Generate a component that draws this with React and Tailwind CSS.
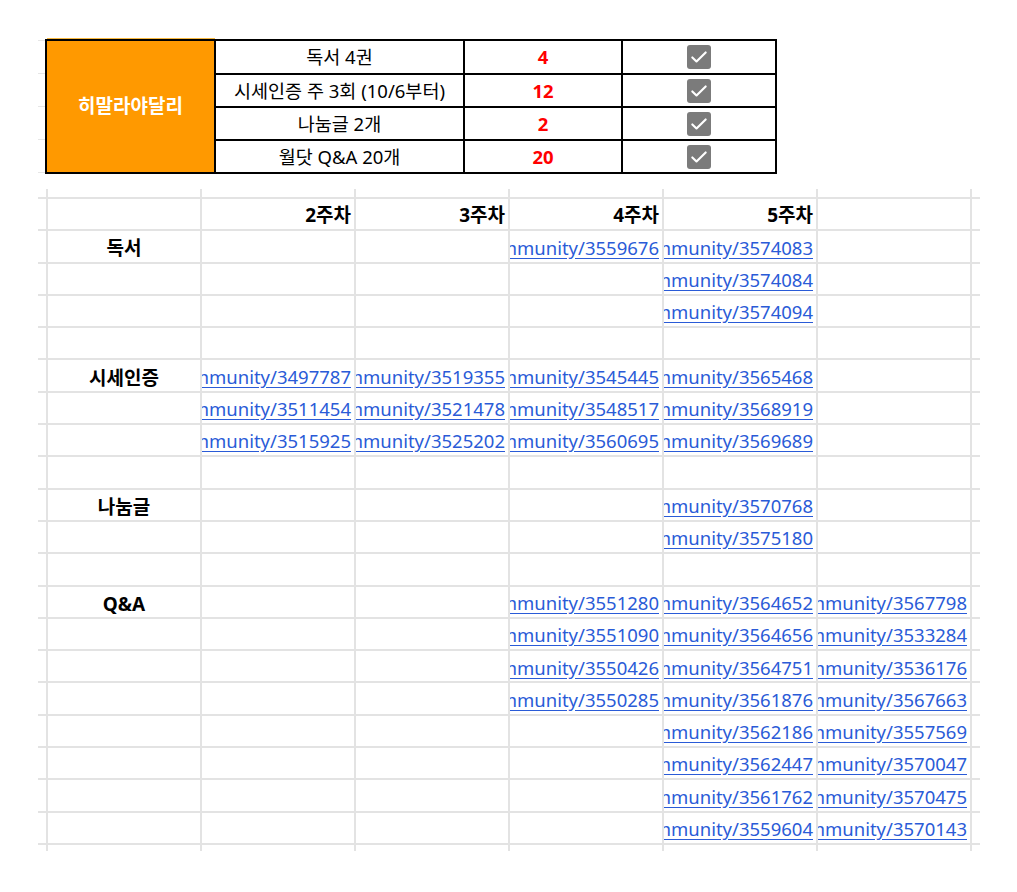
import React from "react";

const FONT = { fontFamily: '"Noto Sans", "Noto Sans CJK KR", sans-serif' };

const topRows = [
  { label: "독서 4권", n: "4" },
  { label: "시세인증 주 3회 (10/6부터)", n: "12" },
  { label: "나눔글 2개", n: "2" },
  { label: "월닷 Q&A 20개", n: "20" },
];

const grid = [
  ["", "2주차", "3주차", "4주차", "5주차", ""],
  ["독서", "", "", "3559676", "3574083", ""],
  ["", "", "", "", "3574084", ""],
  ["", "", "", "", "3574094", ""],
  ["", "", "", "", "", ""],
  ["시세인증", "3497787", "3519355", "3545445", "3565468", ""],
  ["", "3511454", "3521478", "3548517", "3568919", ""],
  ["", "3515925", "3525202", "3560695", "3569689", ""],
  ["", "", "", "", "", ""],
  ["나눔글", "", "", "", "3570768", ""],
  ["", "", "", "", "3575180", ""],
  ["", "", "", "", "", ""],
  ["Q&A", "", "", "3551280", "3564652", "3567798"],
  ["", "", "", "3551090", "3564656", "3533284"],
  ["", "", "", "3550426", "3564751", "3536176"],
  ["", "", "", "3550285", "3561876", "3567663"],
  ["", "", "", "", "3562186", "3557569"],
  ["", "", "", "", "3562447", "3570047"],
  ["", "", "", "", "3561762", "3570475"],
  ["", "", "", "", "3559604", "3570143"],
];

function Check() {
  return (
    <div className="w-[24px] h-[24px] rounded-[3px] bg-[#7b7b7b] flex items-center justify-center">
      <svg width="20" height="20" viewBox="0 0 24 24" fill="none">
        <path d="M4 12.5l5 4.8L20 6.5" stroke="white" strokeWidth="2.6" strokeLinecap="round" strokeLinejoin="round" />
      </svg>
    </div>
  );
}

function Cell({ r, c, v }) {
  if (c === 0) {
    return (
      <div className="bg-white flex items-center justify-center pt-[5px] font-bold text-black text-[19px] leading-none">
        {v}
      </div>
    );
  }
  if (r === 0) {
    return (
      <div className="bg-white flex items-center justify-end pr-[3px] pt-[3px] font-bold text-black text-[19px] leading-none">
        {v}
      </div>
    );
  }
  if (!v) return <div className="bg-white" />;
  return (
    <div className="bg-white flex items-center justify-end overflow-hidden whitespace-nowrap pr-[3px] pt-[3px]">
      <a className="shrink-0 text-[18.5px] leading-none text-[#2a5bd7] underline underline-offset-[3px]">
        {"https://cafe.naver.com/community/" + v}
      </a>
    </div>
  );
}

export default function App() {
  return (
    <div className="w-[1017px] h-[892px] bg-white overflow-hidden" style={FONT}>
      <div className="pt-[38px] flex">
        <div className="w-[45px] pl-[38px] pt-[2px] flex flex-col">
          <div className="h-[1px] bg-[#e6e6e6]" />
          <div className="h-[33px] border-b border-[#e6e6e6]" />
          <div className="h-[33px] border-b border-[#e6e6e6]" />
          <div className="h-[33px] border-b border-[#e6e6e6]" />
          <div className="h-[33px] border-b border-[#e6e6e6]" />
        </div>
        <div className="flex flex-col">
          <div className="ml-[2px] w-[168px] h-[1px] bg-[#f7b840]" />
          <div className="grid grid-cols-[167px_247px_156px_152px] grid-rows-[32px_31px_31px_31px] gap-[2px] p-[2px] bg-black w-[732px]">
            <div className="row-span-4 bg-[#ff9900] flex items-center justify-center text-white font-bold text-[19px]">
              히말라야달리
            </div>
            {topRows.map((t, i) => (
              <React.Fragment key={i}>
                <div className="bg-white flex items-center justify-center text-[18.5px] text-black">{t.label}</div>
                <div className="bg-white flex items-center justify-center text-[18.5px] font-bold text-[#ff0000]">{t.n}</div>
                <div className="bg-white flex items-center justify-center">
                  <Check />
                </div>
              </React.Fragment>
            ))}
          </div>
        </div>
      </div>

      <div className="mt-[15px] ml-[38px] w-[942px] grid grid-cols-[8px_repeat(6,152px)_8px] grid-rows-[8px_repeat(20,30.3px)_6px] gap-[2px] bg-[#e3e3e3]">
        {Array.from({ length: 8 }).map((_, i) => (
          <div key={"t" + i} className="bg-white" />
        ))}
        {grid.map((row, r) => (
          <React.Fragment key={r}>
            <div className="bg-white" />
            {row.map((v, c) => (
              <Cell key={c} r={r} c={c} v={v} />
            ))}
            <div className="bg-white" />
          </React.Fragment>
        ))}
        {Array.from({ length: 8 }).map((_, i) => (
          <div key={"b" + i} className="bg-white" />
        ))}
      </div>
    </div>
  );
}
